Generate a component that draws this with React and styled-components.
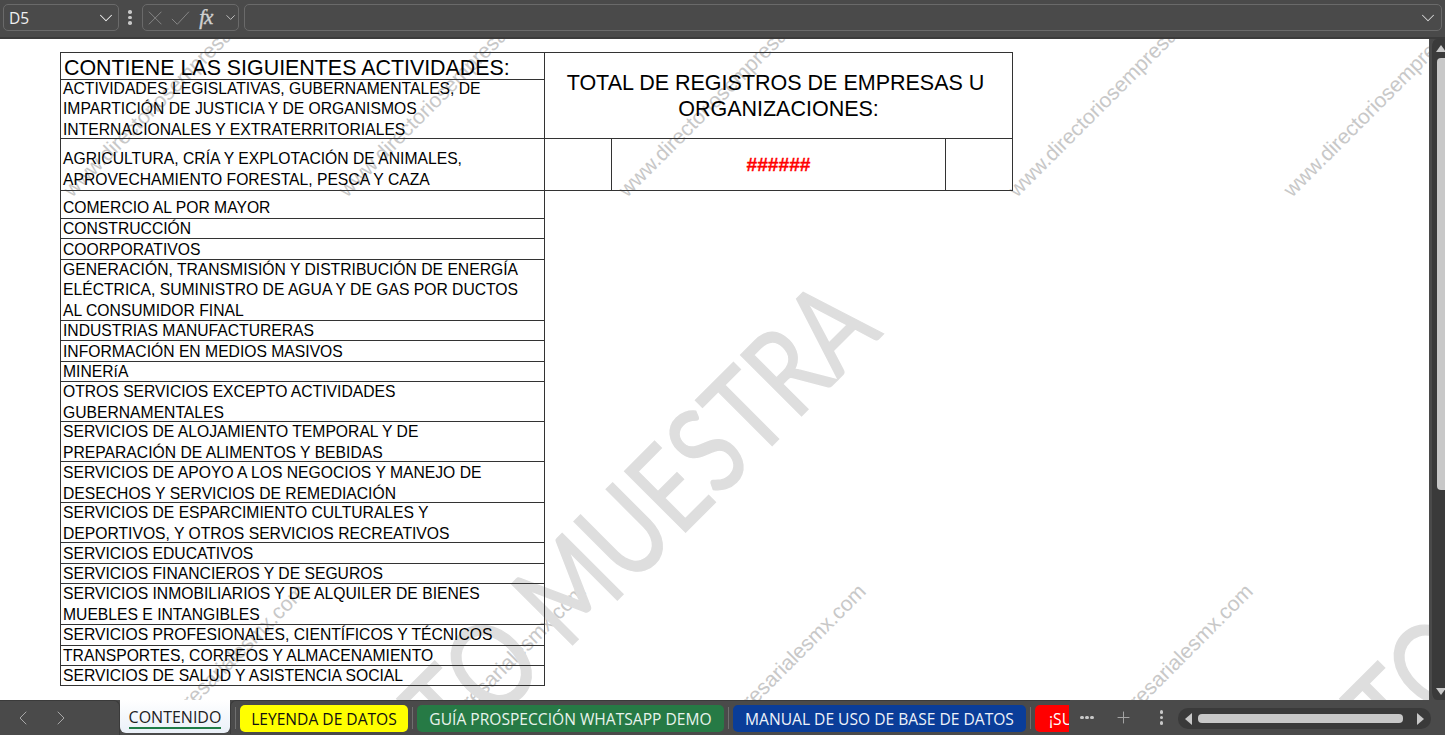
import React from 'react';
import styled, { createGlobalStyle } from 'styled-components';
import { ChevronDown, ChevronLeft, ChevronRight, Plus } from 'lucide-react';

// text, row height, how far the text sits below the cell's bottom edge
const restRows = [
  ['COMERCIO AL POR MAYOR', 28, 0],
  ['CONSTRUCCIÓN', 20, 1],
  ['COORPORATIVOS', 21, 1],
  ['GENERACIÓN, TRANSMISIÓN Y DISTRIBUCIÓN DE ENERGÍA\nELÉCTRICA, SUMINISTRO DE AGUA Y DE GAS POR DUCTOS\nAL CONSUMIDOR FINAL', 61, 1],
  ['INDUSTRIAS MANUFACTURERAS', 20, 1],
  ['INFORMACIÓN EN MEDIOS MASIVOS', 21, 1],
  ['MINERíA', 20, 1],
  ['OTROS SERVICIOS EXCEPTO ACTIVIDADES\nGUBERNAMENTALES', 40, 2],
  ['SERVICIOS DE ALOJAMIENTO TEMPORAL Y DE\nPREPARACIÓN DE ALIMENTOS Y BEBIDAS', 40, 2],
  ['SERVICIOS DE APOYO A LOS NEGOCIOS Y MANEJO DE\nDESECHOS Y SERVICIOS DE REMEDIACIÓN', 41, 2],
  ['SERVICIOS DE ESPARCIMIENTO CULTURALES Y\nDEPORTIVOS, Y OTROS SERVICIOS RECREATIVOS', 40, 2],
  ['SERVICIOS EDUCATIVOS', 21, 1],
  ['SERVICIOS FINANCIEROS Y DE SEGUROS', 20, 1],
  ['SERVICIOS INMOBILIARIOS Y DE ALQUILER DE BIENES\nMUEBLES E INTANGIBLES', 41, 1],
  ['SERVICIOS PROFESIONALES, CIENTÍFICOS Y TÉCNICOS', 21, 0],
  ['TRANSPORTES, CORREOS Y ALMACENAMIENTO', 20, 1],
  ['SERVICIOS DE SALUD Y ASISTENCIA SOCIAL', 20, 1],
];

const smallMarks = [
  [67, 193], [342, 193], [622, 193], [1012, 193], [1287, 193],
  [53, 837], [333, 837], [613, 837], [1000, 837],
];

const sheetTabs = [
  { label: 'LEYENDA DE DATOS', bg: '#ffff00', fg: '#111', w: 168 },
  { label: 'GUÍA PROSPECCIÓN WHATSAPP DEMO', bg: '#267a45', fg: '#e8f3ec', w: 307 },
  { label: 'MANUAL DE USO DE BASE DE DATOS', bg: '#0a3d99', fg: '#eef2fa', w: 293 },
];

export default function App() {
  return (
    <Page>
      <GlobalStyle />
      <FormulaBar>
        <NameBox>
          <span>D5</span>
          <ChevronDown size={22} strokeWidth={1.1} />
        </NameBox>
        <Kebab><i /><i /><i /></Kebab>
        <FxGroup>
          <svg width="16" height="16" viewBox="0 0 16 16" fill="none" stroke="#8c8c8c" strokeWidth="1">
            <path d="M1 1 L15 15 M15 1 L1 15" />
          </svg>
          <svg width="21" height="16" viewBox="0 0 21 16" fill="none" stroke="#8c8c8c" strokeWidth="1">
            <path d="M1 9 L7 15 L20 1" />
          </svg>
          <FxLabel>fx</FxLabel>
          <ChevronDown size={17} strokeWidth={1.3} />
        </FxGroup>
        <FormulaInput>
          <ChevronDown size={22} strokeWidth={1.1} />
        </FormulaInput>
      </FormulaBar>

      <Middle>
        <Sheet>
          {smallMarks.map(([x, y]) => (
            <SmallMark key={`${x}-${y}`} $x={x} $y={y}>www.directoriosempresarialesmx.com</SmallMark>
          ))}
          <BigMark $endX={897} $endY={347}>TEXTO MUESTRA</BigMark>
          <BigMark $endX={1840} $endY={347}>TEXTO MUESTRA</BigMark>

          <Grid>
            <colgroup>
              <col style={{ width: 484 }} />
              <col style={{ width: 67 }} />
              <col style={{ width: 334 }} />
              <col style={{ width: 67 }} />
            </colgroup>
            <tbody>
              <tr>
                <HeadCell><CellText $h={27} $drop={2}>CONTIENE LAS SIGUIENTES ACTIVIDADES:</CellText></HeadCell>
                <TotalCell colSpan={3} rowSpan={2}>
                  {'TOTAL DE REGISTROS DE EMPRESAS U \nORGANIZACIONES:'}
                </TotalCell>
              </tr>
              <tr>
                <Cell>
                  <CellText $h={59} $drop={2}>
                    {'ACTIVIDADES LEGISLATIVAS, GUBERNAMENTALES, DE\nIMPARTICIÓN DE JUSTICIA Y DE ORGANISMOS\nINTERNACIONALES Y EXTRATERRITORIALES'}
                  </CellText>
                </Cell>
              </tr>
              <tr>
                <Cell>
                  <CellText $h={52} $drop={0}>
                    {'AGRICULTURA, CRÍA Y EXPLOTACIÓN DE ANIMALES,\nAPROVECHAMIENTO FORESTAL, PESCA Y CAZA'}
                  </CellText>
                </Cell>
                <Cell />
                <CountCell>######</CountCell>
                <Cell />
              </tr>
              {restRows.map(([text, h, drop]) => (
                <tr key={text}>
                  <Cell><CellText $h={h} $drop={drop}>{text}</CellText></Cell>
                </tr>
              ))}
            </tbody>
          </Grid>
        </Sheet>

        <VScroll>
          <UpArrow />
          <VThumb />
          <DownArrow />
        </VScroll>
      </Middle>

      <TabBar>
        <TabNav>
          <ChevronLeft size={24} strokeWidth={1} />
          <ChevronRight size={24} strokeWidth={1} />
        </TabNav>
        <ActiveTab><span>CONTENIDO</span></ActiveTab>
        <TabStrip>
          <Separator />
          {sheetTabs.map((t) => (
            <React.Fragment key={t.label}>
              <SheetTab $bg={t.bg} $fg={t.fg} $w={t.w}>{t.label}</SheetTab>
              <Separator />
            </React.Fragment>
          ))}
          <ClippedTab>¡SU</ClippedTab>
        </TabStrip>
        <TabTools>
          <Dots><i /><i /><i /></Dots>
          <Plus size={19} strokeWidth={1.2} color="#a8a8a8" />
          <Kebab><i /><i /><i /></Kebab>
        </TabTools>
        <HScroll>
          <ArrowLeft />
          <HThumb />
          <ArrowRight />
        </HScroll>
      </TabBar>
    </Page>
  );
}

const GlobalStyle = createGlobalStyle`
  html, body {
    margin: 0;
    height: 100%;
    overflow: hidden;
    background: #4a4a4a;
  }
`;

const Page = styled.div`
  display: flex;
  flex-direction: column;
  width: 1445px;
  height: 735px;
  overflow: hidden;
  font-family: "Open Sans", "Liberation Sans", sans-serif;
`;

const FormulaBar = styled.div`
  display: flex;
  align-items: flex-start;
  flex: 0 0 39px;
  box-sizing: border-box;
  height: 39px;
  padding: 4px 3px 0;
  background: #4a4a4a;
  border-bottom: 2px solid #3b3b3b;
  color: #d6d6d6;
`;

const Outlined = styled.div`
  display: flex;
  align-items: center;
  box-sizing: border-box;
  height: 27px;
  border: 1px solid #6a6a6a;
  border-radius: 5px;
`;

const NameBox = styled(Outlined)`
  justify-content: space-between;
  width: 116px;
  padding: 0 1px 0 5px;
  color: #f0f0f0;
  font-size: 15.5px;
`;

const Kebab = styled.div`
  display: flex;
  flex-direction: column;
  justify-content: center;
  gap: 2px;
  width: 4px;
  height: 27px;
  margin: 0 10px 0 9px;

  i {
    width: 3.5px;
    height: 3.5px;
    border-radius: 50%;
    background: #c8c8c8;
  }
`;

const FxGroup = styled(Outlined)`
  width: 97px;
  padding: 0 0 0 5px;

  svg:nth-child(2) {
    margin-left: 9px;
  }
`;

const FxLabel = styled.span`
  width: 24px;
  margin: 0 2px 0 9px;
  color: #d0d0d0;
  font-family: "Liberation Serif", serif;
  font-size: 21px;
  font-style: italic;
  letter-spacing: -1px;
  -webkit-text-stroke: 0.4px #d0d0d0;
`;

const FormulaInput = styled(Outlined)`
  justify-content: flex-end;
  flex: 1;
  margin-left: 5px;
  padding-right: 2px;
`;

const Middle = styled.div`
  display: flex;
  flex: 1;
  min-height: 0;
`;

const Sheet = styled.div`
  position: relative;
  flex: 0 0 1429px;
  box-sizing: border-box;
  padding: 13px 0 0 60px;
  overflow: hidden;
  background: #fff;
`;

const SmallMark = styled.div`
  position: absolute;
  left: ${(p) => p.$x}px;
  top: ${(p) => p.$y - 39 - 15}px;
  color: #c8c8c8;
  font-family: "Liberation Sans", sans-serif;
  font-size: 21px;
  line-height: 30px;
  white-space: nowrap;
  transform: rotate(-45deg);
  transform-origin: left center;
`;

const BigMark = styled.div`
  position: absolute;
  right: ${(p) => 1429 - p.$endX}px;
  top: ${(p) => p.$endY - 39 - 130}px;
  color: #dedede;
  font-family: Lato, sans-serif;
  font-size: 120px;
  line-height: 130px;
  white-space: nowrap;
  -webkit-text-stroke: 1.5px #dedede;
  transform: rotate(-45deg) scaleX(0.8);
  transform-origin: right bottom;
`;

const Grid = styled.table`
  position: relative;
  width: 952px;
  border-collapse: collapse;
  table-layout: fixed;
  color: #000;
  font-family: "Liberation Sans", sans-serif;
`;

const Cell = styled.td`
  box-sizing: border-box;
  padding: 0 2px;
  border: 1px solid #333;
  font-size: 15.7px;
  line-height: 20.3px;
  vertical-align: bottom;
  white-space: pre;
`;

const CellText = styled.div`
  display: flex;
  align-items: flex-end;
  height: ${(p) => p.$h - 1 + p.$drop}px;
  margin-bottom: ${(p) => -p.$drop}px;
`;

const HeadCell = styled(Cell)`
  padding: 0 3px;
  font-size: 21.4px;
  line-height: 26px;
`;

const TotalCell = styled(Cell)`
  padding: 0;
  font-size: 21.5px;
  line-height: 26px;
  text-align: center;
  vertical-align: middle;
`;

const CountCell = styled(Cell)`
  padding-top: 2px;
  color: #ff0000;
  font-size: 19.2px;
  font-weight: 700;
  text-align: center;
  vertical-align: middle;
  -webkit-text-stroke: 0.3px #ff0000;
`;

const VScroll = styled.div`
  position: relative;
  flex: 0 0 16px;
  box-sizing: border-box;
  border-left: 3px solid #4a4a4a;
  border-radius: 8px 0 0 8px;
  background: #3a3a3a;
  overflow: hidden;
`;

const UpArrow = styled.div`
  position: absolute;
  top: 6px;
  left: 4px;
  border-left: 5px solid transparent;
  border-right: 5px solid transparent;
  border-bottom: 7px solid #c8c8c8;
`;

const VThumb = styled.div`
  position: absolute;
  top: 19px;
  bottom: 210px;
  left: 5px;
  width: 14px;
  border-radius: 4px;
  background: #c8c8c8;
`;

const DownArrow = styled.div`
  position: absolute;
  bottom: 5px;
  left: 4px;
  border-left: 5px solid transparent;
  border-right: 5px solid transparent;
  border-top: 7px solid #c8c8c8;
`;

const TabBar = styled.div`
  display: flex;
  align-items: flex-start;
  flex: 0 0 35px;
  background: #4a4a4a;
`;

const TabNav = styled.div`
  display: flex;
  align-items: center;
  gap: 14px;
  box-sizing: border-box;
  width: 120px;
  height: 35px;
  padding-left: 11px;
  border-top: 1px solid #3a3a3a;
  border-right: 1px solid #3a3a3a;
  border-top-right-radius: 6px;
  color: #a8a8a8;
`;

const ActiveTab = styled.div`
  display: flex;
  justify-content: center;
  box-sizing: border-box;
  width: 110px;
  height: 33px;
  background: linear-gradient(#ffffff, #eaf0f8);
  border-radius: 0 0 6px 6px;
  color: #222;
  font-size: 16px;

  span {
    height: 27px;
    line-height: 34px;
    border-bottom: 2.5px solid #1e7b45;
  }
`;

const TabStrip = styled.div`
  display: flex;
  align-items: center;
  gap: 4px;
  flex: 0 0 840px;
  box-sizing: border-box;
  height: 34px;
  padding: 3px 0 2px 4px;
  overflow: hidden;
  border-top: 1px solid #3a3a3a;
  border-left: 1px solid #3a3a3a;
  border-top-left-radius: 6px;
`;

const Separator = styled.div`
  flex: 0 0 1px;
  height: 22px;
  background: #6f6f6f;
`;

const SheetTab = styled.div`
  flex: 0 0 ${(p) => p.$w}px;
  box-sizing: border-box;
  height: 27px;
  border-radius: 5px;
  background: ${(p) => p.$bg};
  color: ${(p) => p.$fg};
  font-size: 15.6px;
  line-height: 28px;
  text-align: center;
  white-space: nowrap;
`;

const ClippedTab = styled.div`
  flex: 0 0 34px;
  box-sizing: border-box;
  height: 27px;
  padding-left: 14px;
  overflow: hidden;
  border-radius: 5px 0 0 5px;
  background: #ff0000;
  color: #fff;
  font-size: 15.6px;
  line-height: 28px;
  white-space: nowrap;
`;

const TabTools = styled.div`
  display: flex;
  align-items: center;
  flex: 0 0 108px;
  box-sizing: border-box;
  height: 35px;
  padding-left: 10px;

  svg {
    margin-left: 20px;
  }

  ${Kebab} {
    margin: 0 0 0 27px;
  }
`;

const Dots = styled.div`
  display: flex;
  gap: 1.5px;

  i {
    width: 3.5px;
    height: 3.5px;
    border-radius: 50%;
    background: #c8c8c8;
  }
`;

const HScroll = styled.div`
  display: flex;
  align-items: center;
  flex: 0 0 253px;
  box-sizing: border-box;
  height: 21px;
  margin-top: 8px;
  padding: 0 7px;
  border-radius: 10px;
  background: #3a3a3a;
`;

const HThumb = styled.div`
  flex: 0 0 205px;
  height: 9px;
  margin: 0 14px 0 6px;
  border-radius: 4px;
  background: #c8c8c8;
`;

const ArrowLeft = styled.div`
  border-top: 6px solid transparent;
  border-bottom: 6px solid transparent;
  border-right: 7px solid #c8c8c8;
`;

const ArrowRight = styled.div`
  border-top: 6px solid transparent;
  border-bottom: 6px solid transparent;
  border-left: 7px solid #c8c8c8;
`;
